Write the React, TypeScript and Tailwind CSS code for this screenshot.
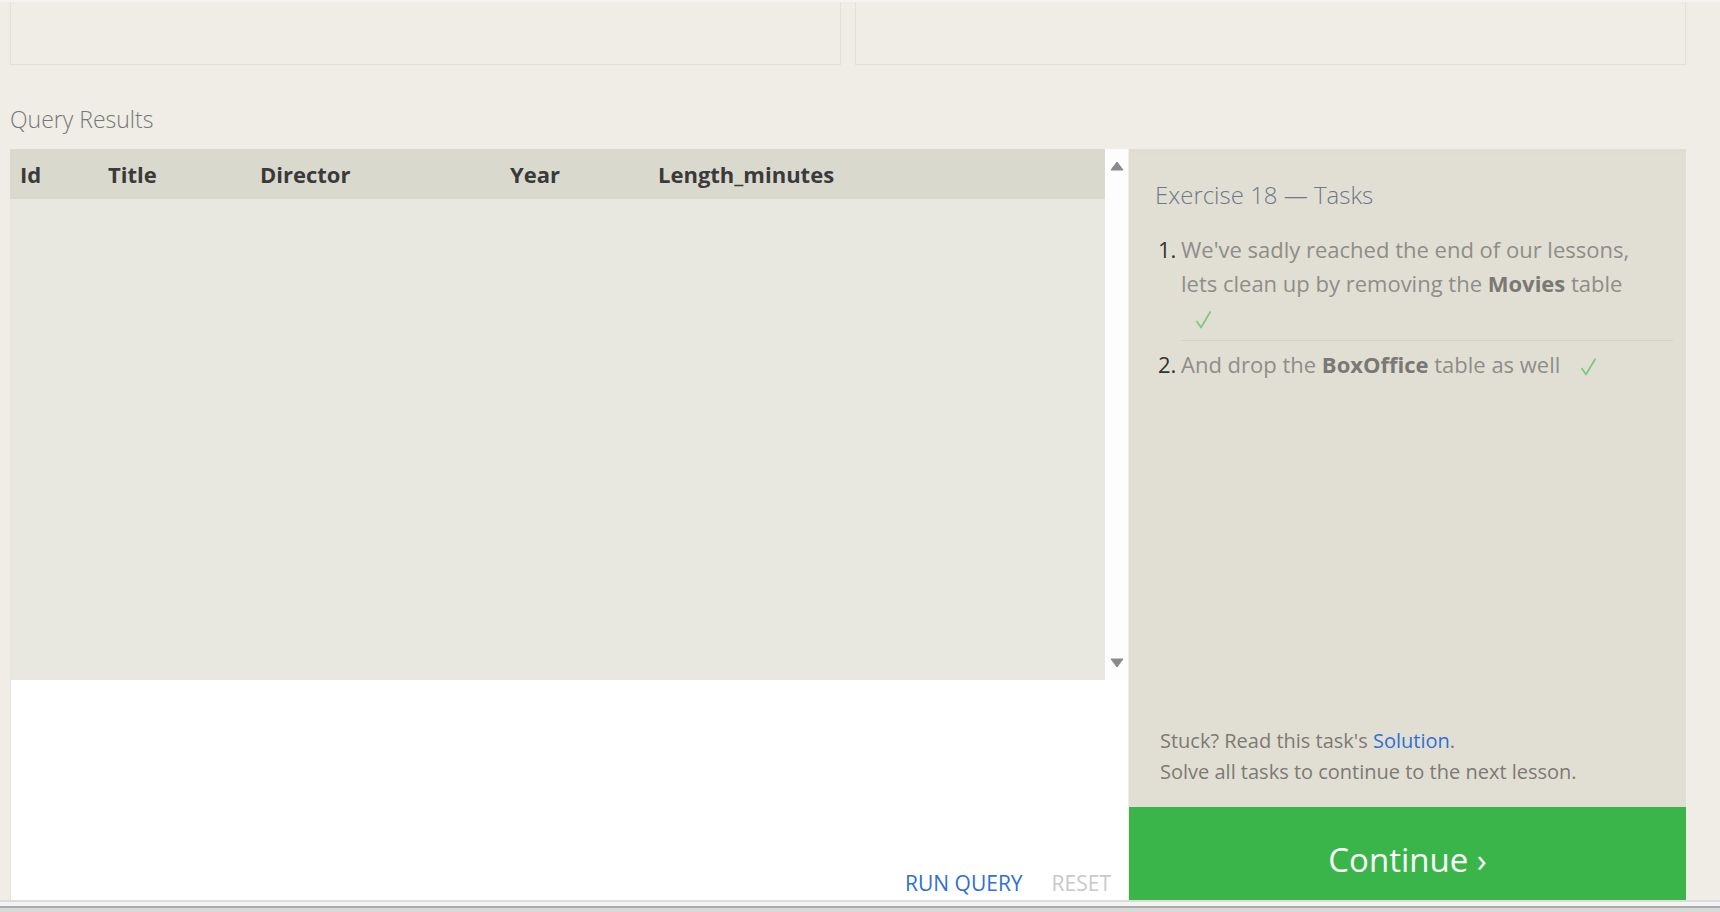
import { Fragment } from "react";

const columns = [
  { name: "Id", w: "w-[88px]" },
  { name: "Title", w: "w-[152px]" },
  { name: "Director", w: "w-[250px]" },
  { name: "Year", w: "w-[148px]" },
  { name: "Length_minutes", w: "flex-1" },
];

function Check() {
  return (
    <svg
      width="17"
      height="19"
      viewBox="0 0 17 19"
      className="inline-block ml-[14px] align-[-3px]"
    >
      <path d="M1.5 11 L6 17.5 L15.5 1.5" fill="none" stroke="#7ccb85" strokeWidth="1.8" strokeLinejoin="round" />
    </svg>
  );
}

export default function App() {
  return (
    <div
      className="w-[1720px] h-[912px] overflow-hidden bg-[#efede6] flex flex-col"
      style={{ fontFamily: '"Open Sans", "Liberation Sans", sans-serif' }}
    >
      <div className="h-[2px] bg-[#f4f4f2]" />
      {/* editor boxes, scrolled mostly off-screen */}
      <div className="flex gap-[14px] pl-[10px] pr-[34px]">
        <div className="flex-1 h-[63px] border border-t-0 border-[#e2e0d8]" />
        <div className="flex-1 h-[63px] border border-t-0 border-[#e2e0d8]" />
      </div>

      <div className="pl-[10px] pt-[43px] h-[84px] text-[23px] font-light text-[#777] leading-none">
        Query Results
      </div>

      <div className="flex pl-[10px] pr-[34px] h-[751px]">
        {/* results + editor */}
        <div className="w-[1118px] flex flex-col">
          <div className="flex h-[531px]">
            <div className="flex-1 flex flex-col bg-[#e9e8e0]">
              <div className="flex items-center h-[50px] bg-[#dad9ce] pl-[10px] text-[22px] font-bold text-[#3a3a3a]">
                {columns.map((c) => (
                  <div key={c.name} className={c.w}>
                    {c.name}
                  </div>
                ))}
              </div>
            </div>
            <div className="w-[23px] bg-[#fdfdfd] flex flex-col items-center justify-between py-[12px]">
              <svg width="14" height="10" viewBox="0 0 14 10">
                <path d="M7 1 L13 9 L1 9 Z" fill="#8a8a8a" stroke="#8a8a8a" strokeLinejoin="round" />
              </svg>
              <svg width="14" height="10" viewBox="0 0 14 10">
                <path d="M1 1 L13 1 L7 9 Z" fill="#8a8a8a" stroke="#8a8a8a" strokeLinejoin="round" />
              </svg>
            </div>
          </div>
          <div className="flex-1 bg-white border-l border-[#e4e2da] flex items-end justify-end gap-[29px] pr-[17px] pb-[6px] text-[21px] leading-none">
            <span className="text-[#2f6fd6]">RUN QUERY</span>
            <span className="text-[#c9c9c9]">RESET</span>
          </div>
        </div>

        {/* tasks panel */}
        <div className="flex-1 ml-[1px] flex flex-col">
          <div className="flex-1 bg-[#e1dfd4] border-t-[4px] border-[#dfddd2] flex flex-col pl-[26px] pr-[13px] pt-[30px] pb-[20px]">
            <div className="text-[24px] font-light text-[#707786] leading-none">
              Exercise 18 — Tasks
            </div>
            <ol className="mt-[25px] pl-[3px] text-[22px] text-[#8f8d88] leading-[34px]">
              {[
                <Fragment key="a">
                  We've sadly reached the end of our lessons, lets clean up by removing the{" "}
                  <b className="font-bold text-[#7a7873]">Movies</b> table <Check />
                </Fragment>,
                <Fragment key="b">
                  And drop the <b className="font-bold text-[#7a7873]">BoxOffice</b> table as well{" "}
                  <Check />
                </Fragment>,
              ].map((t, i) => (
                <li key={i} className={"flex " + (i === 1 ? "pt-[6px]" : "")}>
                  <span className="w-[23px] shrink-0 text-[#333]">{i + 1}.</span>
                  <span
                    className={
                      "flex-1 " + (i === 0 ? "border-b border-[#d5d3c9] pb-[6px] pr-[20px]" : "")
                    }
                  >
                    {t}
                  </span>
                </li>
              ))}
            </ol>
            <div className="mt-auto text-[20px] text-[#7d7973] leading-[31px] pl-[5px]">
              <div>
                Stuck? Read this task's <span className="text-[#2f6fd6]">Solution</span>.
              </div>
              <div>Solve all tasks to continue to the next lesson.</div>
            </div>
          </div>
          <div className="h-[93px] bg-[#3ab54a] flex items-center justify-center pt-[12px] text-white text-[33px] leading-none">
            Continue ›
          </div>
        </div>
      </div>

      <div className="h-[2px] bg-[#dcdcdc]" />
      <div className="h-[4px] bg-[#f3f3f3]" />
      <div className="h-[2px] bg-[#aaaaaa]" />
      <div className="flex-1 bg-[#d9dbd8]" />
    </div>
  );
}
